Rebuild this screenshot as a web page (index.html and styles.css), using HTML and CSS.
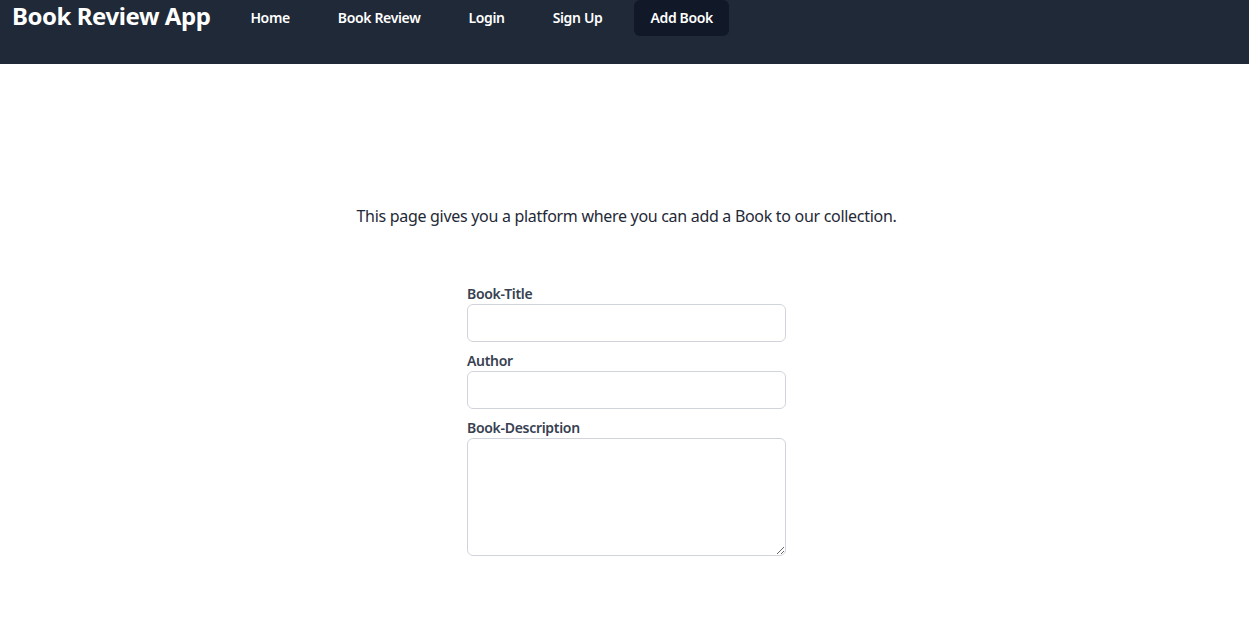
FILE: index.html
```html
<!DOCTYPE html>
<html lang="en">
<head>
<meta charset="utf-8">
<title>Book Review App</title>
<link rel="stylesheet" href="styles.css">
</head>
<body>
<header class="topbar">
  <div class="brand">Book Review App</div>
  <nav class="nav">
    <a class="nav-link" href="#">Home</a>
    <a class="nav-link" href="#">Book Review</a>
    <a class="nav-link" href="#">Login</a>
    <a class="nav-link" href="#">Sign Up</a>
    <a class="nav-link active" href="#">Add Book</a>
  </nav>
</header>
<main class="main">
  <p class="intro">This page gives you a platform where you can add a Book to our collection.</p>
  <form class="form">
    <label class="label" for="title">Book-Title</label>
    <input class="input" id="title" type="text">
    <label class="label" for="author">Author</label>
    <input class="input" id="author" type="text">
    <label class="label" for="desc">Book-Description</label>
    <textarea class="textarea" id="desc"></textarea>
  </form>
</main>
</body>
</html>
```
FILE: styles.css
```css
* { box-sizing: border-box; }
html, body { margin: 0; padding: 0; background: #ffffff; }
body { font-family: "Noto Sans", "Open Sans", sans-serif; color: #111827; }

.topbar {
  height: 64px;
  background: #1f2937;
  display: flex;
  align-items: flex-start;
  padding-left: 12px;
}
.brand {
  color: #ffffff;
  font-weight: 700;
  font-size: 24px;
  line-height: 32px;
  margin-right: 24px;
  letter-spacing: -0.45px;
}
.nav { display: flex; gap: 16px; }
.nav-link {
  color: #ffffff;
  text-decoration: none;
  font-size: 14px;
  font-weight: 600;
  line-height: 20px;
  padding: 8px 16px;
  border-radius: 6px;
  letter-spacing: -0.35px;
}
.nav-link.active { background: #111827; }

.main {
  display: flex;
  flex-direction: column;
  align-items: center;
  padding: 140px 0 0 4px;
}
.intro {
  margin: 0;
  font-size: 16px;
  line-height: 24px;
  color: #1f2937;
  letter-spacing: -0.3px;
}
.form {
  width: 319px;
  margin-top: 56px;
  display: flex;
  flex-direction: column;
}
.label {
  font-size: 14px;
  line-height: 20px;
  font-weight: 600;
  color: #374151;
  letter-spacing: -0.3px;
}
.input, .textarea {
  width: 100%;
  border: 1px solid #d1d5db;
  border-radius: 6px;
  background: #fff;
  font: inherit;
  margin-bottom: 9px;
}
.input { height: 38px; }
.textarea { height: 118px; resize: vertical; margin-bottom: 0; }
```
